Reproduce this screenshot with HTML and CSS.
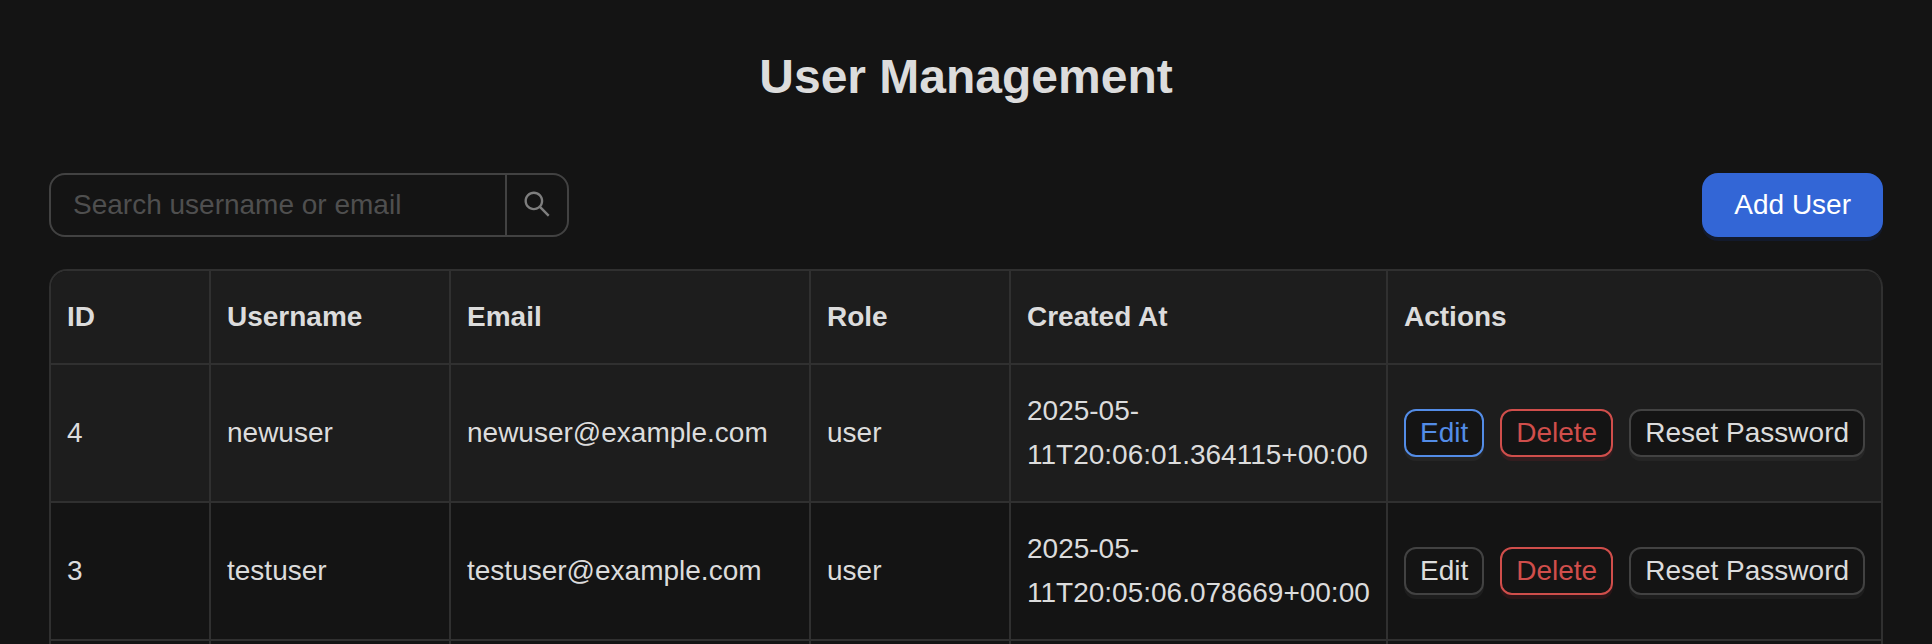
FILE: index.html
```html
<!DOCTYPE html>
<html lang="en">
<head>
<meta charset="utf-8">
<title>User Management</title>
<link rel="stylesheet" href="styles.css">
</head>
<body>
<main class="page">
  <h1 class="title">User Management</h1>
  <div class="toolbar">
    <form class="search">
      <input class="search-input" type="text" placeholder="Search username or email" aria-label="Search">
      <button class="search-btn" type="button" aria-label="Search">
        <svg class="search-icon" viewBox="64 64 896 896" fill="currentColor"><path d="M909.6 854.5L649.9 594.8C690.2 542.7 712 479 712 412c0-80.2-31.3-155.4-87.9-212.1-56.6-56.7-132-87.9-212.1-87.9s-155.5 31.3-212.1 87.9C143.2 256.5 112 331.8 112 412c0 80.1 31.3 155.5 87.9 212.1C256.5 680.8 331.8 712 412 712c67 0 130.6-21.8 182.7-62l259.7 259.6a8.2 8.2 0 0011.6 0l43.6-43.5a8.2 8.2 0 000-11.6zM570.4 570.4C528 612.7 471.8 636 412 636s-116-23.3-158.4-65.6C211.3 528 188 471.8 188 412s23.3-116.1 65.6-158.4C296 211.3 352.2 188 412 188s116.1 23.2 158.4 65.6S636 352.2 636 412s-23.3 116.1-65.6 158.4z"/></svg>
      </button>
    </form>
    <button class="btn-primary" type="button">Add User</button>
  </div>
  <table class="users">
    <colgroup>
      <col class="col-id"><col class="col-name"><col class="col-email"><col class="col-role"><col class="col-created"><col class="col-actions">
    </colgroup>
    <thead>
      <tr><th>ID</th><th>Username</th><th>Email</th><th>Role</th><th>Created At</th><th>Actions</th></tr>
    </thead>
    <tbody>
      <tr class="hovered">
        <td>4</td><td>newuser</td><td>newuser@example.com</td><td>user</td>
        <td>2025-05-<br>11T20:06:01.364115+00:00</td>
        <td><div class="actions"><button class="btn active" type="button">Edit</button><button class="btn danger" type="button">Delete</button><button class="btn" type="button">Reset Password</button></div></td>
      </tr>
      <tr>
        <td>3</td><td>testuser</td><td>testuser@example.com</td><td>user</td>
        <td>2025-05-<br>11T20:05:06.078669+00:00</td>
        <td><div class="actions"><button class="btn" type="button">Edit</button><button class="btn danger" type="button">Delete</button><button class="btn" type="button">Reset Password</button></div></td>
      </tr>
      <tr class="next"><td></td><td></td><td></td><td></td><td></td><td></td></tr>
    </tbody>
  </table>
</main>
</body>
</html>
```
FILE: styles.css
```css
* { box-sizing: border-box; }

html, body {
  margin: 0;
  height: 100%;
  overflow: hidden;
  background: #141414;
}

body, button, input {
  font-family: "Liberation Sans", Arial, sans-serif;
  font-size: 28px;
  line-height: 44px;
  color: #dcdcdc;
}

.page { padding: 44px 49px 0; }

.title {
  margin: 0 0 64px;
  font-size: 48px;
  line-height: 65px;
  font-weight: 700;
  text-align: center;
}

.toolbar {
  display: flex;
  justify-content: space-between;
  margin-bottom: 32px;
}

.search {
  display: flex;
  width: 520px;
  height: 64px;
  border: 2px solid #424242;
  border-radius: 16px;
}

.search-input {
  flex: 1;
  min-width: 0;
  padding: 0 22px;
  border: 0;
  outline: 0;
  background: transparent;
}

.search-input::placeholder { color: #4f4f4f; opacity: 1; }

.search-btn {
  display: flex;
  justify-content: center;
  align-items: center;
  width: 62px;
  padding: 0 0 3px;
  border: 0;
  border-left: 2px solid #424242;
  background: transparent;
  color: #7e7e7e;
}

.search-icon { width: 28px; height: 28px; }

.btn-primary {
  height: 64px;
  padding: 0 32px;
  border: 0;
  border-radius: 16px;
  background: #3366d6;
  color: #fff;
  box-shadow: 0 4px 0 #131a2c;
}

.users {
  width: 1834px;
  table-layout: fixed;
  border-collapse: separate;
  border-spacing: 0;
  border: 2px solid #303030;
  border-right: 0;
  border-bottom: 0;
  border-radius: 18px 18px 0 0;
  overflow: hidden;
}

.col-id { width: 160px; }
.col-name { width: 240px; }
.col-email { width: 360px; }
.col-role { width: 200px; }
.col-created { width: 377px; }
.col-actions { width: 495px; }

.users th, .users td {
  padding: 24px 14px 24px 16px;
  border-right: 2px solid #303030;
  border-bottom: 2px solid #303030;
  text-align: left;
  vertical-align: middle;
  white-space: nowrap;
}

.users th { background: #1d1d1d; font-weight: 700; }
.users th:last-child { border-top-right-radius: 16px; }
.hovered td { background: #1d1d1d; }
.users .next td { height: 3px; padding: 0; border-bottom: 0; }

.actions { display: flex; gap: 16px; }

.btn {
  height: 48px;
  padding: 0 14px;
  border: 2px solid #424242;
  border-radius: 12px;
  background: #141414;
  box-shadow: 0 4px 0 rgba(255, 255, 255, 0.04);
}

.btn.active { border-color: #538ce6; color: #538ce6; }

.btn.danger {
  border-color: #d04e4b;
  color: #d04e4b;
  box-shadow: 0 4px 0 rgba(238, 38, 56, 0.11);
}
```
